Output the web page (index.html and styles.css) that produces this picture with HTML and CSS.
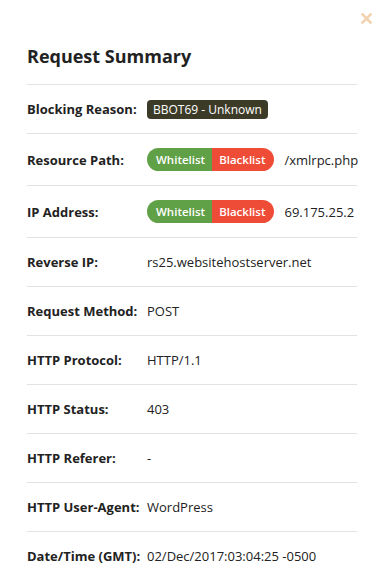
FILE: index.html
```html
<!DOCTYPE html>
<html lang="en">

<head>
    <meta charset="UTF-8">
    <meta name="viewport" content="width=device-width, initial-scale=1.0">
    <title>Request Summary</title>
    <link rel="stylesheet" href="styles.css">
</head>

<body>
    <div class="modal">
        <span class="close">
            <svg width="11" height="11" viewBox="0 0 11 11">
                <path d="M1.5 1.5L9.5 9.5M9.5 1.5L1.5 9.5" stroke="#f2d3b1" stroke-width="2.6" stroke-linecap="square" />
            </svg>
        </span>
        <h2 class="title">Request Summary</h2>
        <div class="rows">
            <div class="row">
                <div class="label">Blocking Reason:</div>
                <div class="value"><span class="badge">BBOT69 - Unknown</span></div>
            </div>
            <div class="row">
                <div class="label">Resource Path:</div>
                <div class="value">
                    <span class="pill"><span class="white">Whitelist</span><span class="black">Blacklist</span></span>
                    /xmlrpc.php
                </div>
            </div>
            <div class="row">
                <div class="label">IP Address:</div>
                <div class="value">
                    <span class="pill"><span class="white">Whitelist</span><span class="black">Blacklist</span></span>
                    69.175.25.2
                </div>
            </div>
            <div class="row">
                <div class="label">Reverse IP:</div>
                <div class="value">rs25.websitehostserver.net</div>
            </div>
            <div class="row">
                <div class="label">Request Method:</div>
                <div class="value">POST</div>
            </div>
            <div class="row">
                <div class="label">HTTP Protocol:</div>
                <div class="value">HTTP/1.1</div>
            </div>
            <div class="row">
                <div class="label">HTTP Status:</div>
                <div class="value">403</div>
            </div>
            <div class="row">
                <div class="label">HTTP Referer:</div>
                <div class="value">-</div>
            </div>
            <div class="row">
                <div class="label">HTTP User-Agent:</div>
                <div class="value">WordPress</div>
            </div>
            <div class="row">
                <div class="label">Date/Time (GMT):</div>
                <div class="value">02/Dec/2017:03:04:25 -0500</div>
            </div>
        </div>
    </div>
</body>

</html>
```

FILE: styles.css
```css
* {
    margin: 0;
    padding: 0;
    box-sizing: border-box;
}

body {
    background-color: #fff;
    font-family: "Open Sans", sans-serif;
    color: #222;
}

.modal {
    position: relative;
    padding: 43px 27px 0 27px;
}

.close {
    position: absolute;
    top: 13px;
    right: 12px;
    display: flex;
}

.title {
    font-size: 18px;
    font-weight: 700;
    color: #222;
    line-height: 26px;
    padding-bottom: 15px;
    border-bottom: 1px solid #e2e2e2;
}

.row {
    display: flex;
    align-items: center;
    padding: 14px 0;
    line-height: 20px;
    border-bottom: 1px solid #e2e2e2;
    font-size: 13px;
}

.row:last-child {
    border-bottom: none;
}

.label {
    width: 120px;
    flex-shrink: 0;
    font-weight: 700;
    color: #222;
}

.value {
    display: flex;
    align-items: center;
    gap: 10px;
    color: #222;
    white-space: nowrap;
}

.badge {
    background-color: #3c3b27;
    color: #fff;
    font-size: 12px;
    padding: 1px 6px;
    border-radius: 4px;
    line-height: 17px;
}

.pill {
    display: flex;
    border-radius: 12px;
    overflow: hidden;
    font-size: 11.5px;
    font-weight: 600;
    color: #fff;
    line-height: 23px;
}

.pill .white {
    background-color: #60a046;
    padding: 0 7px 0 9px;
}

.pill .black {
    background-color: #ef4c38;
    padding: 0 9px 0 7px;
}
```
